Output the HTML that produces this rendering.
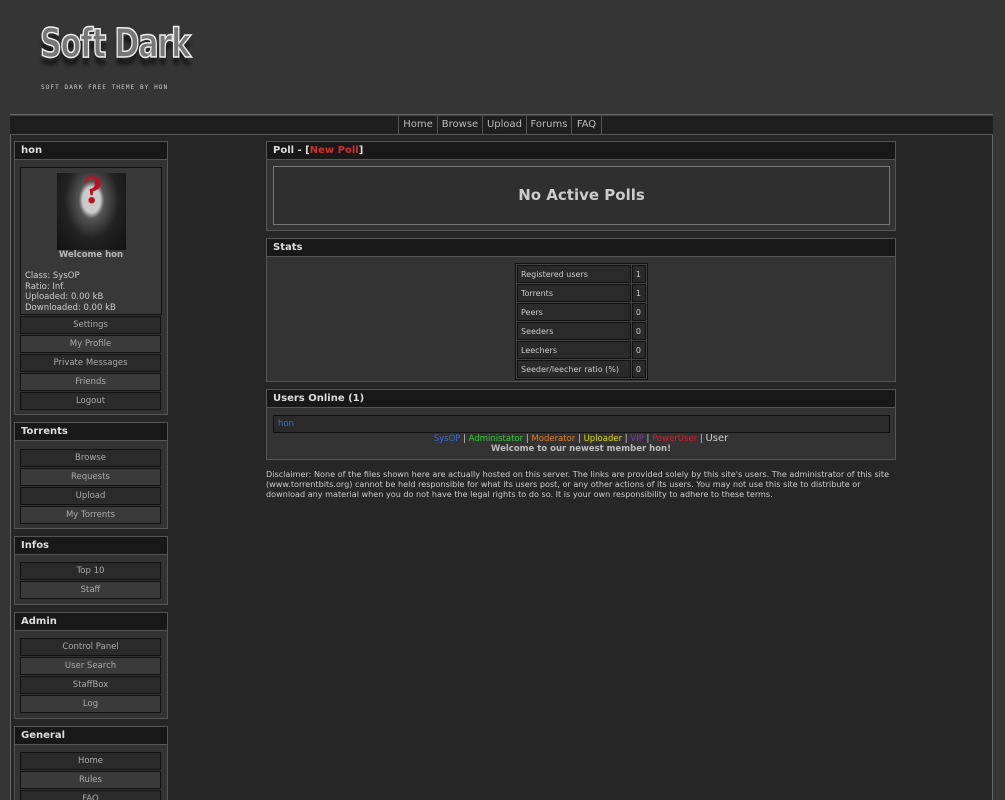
<!DOCTYPE html>
<html><head><meta charset="utf-8"><style>
*{box-sizing:border-box;margin:0;padding:0}
html,body{width:1005px;height:800px;overflow:hidden}
body{background:#353535;font-family:"DejaVu Sans",sans-serif;font-size:9px;color:#ccc;position:relative}
.a{position:absolute}
#wrap{left:10px;top:114px;width:983px;height:700px;border:1px solid #666;background:#262626}
#nav{left:10px;top:115px;width:983px;height:20px;background:#1e1e1e;border-bottom:1px solid #555;border-top:1px solid #444}
#nav .it{position:absolute;top:0;height:18px;border-left:1px solid #555;line-height:18px;font-size:10px;color:#bbb;text-align:center}
.box{position:absolute;background:#333;border:1px solid #555}
.hd{height:18px;background:#181818;border-bottom:1px solid #555;color:#ddd;font-weight:bold;font-size:10px;line-height:18px;padding-left:6px}
.btn{position:absolute;left:5px;width:141px;height:18px;border:1px solid #111;text-align:center;line-height:17px;color:#aaa;font-size:8.5px}
.d{background:#2a2a2a}.l{background:#3a3a3a}
.st td{border:1px solid #111;background:#2a2a2a;height:18px;padding:0 3px;font-size:8px;color:#ccc;white-space:nowrap}
.st{border:1px solid #111;border-collapse:separate;border-spacing:1px;background:#444}
</style></head><body>
<div class="a" style="left:40px;top:24px;font:bold 40px/1 'DejaVu Sans Condensed','Liberation Sans Narrow',sans-serif;color:#777;-webkit-text-stroke:1.5px #eee;letter-spacing:-1.5px;transform:scaleX(0.84);transform-origin:left;text-shadow:0 8px 4px rgba(0,0,0,.5)">Soft Dark</div>
<div class="a" style="left:41px;top:84px;font:6px 'DejaVu Sans Mono',monospace;color:#ccc;letter-spacing:1.1px">SOFT DARK FREE THEME BY HON</div>
<div class="a" id="wrap"></div>
<div class="a" id="nav">
<div class="it" style="left:388px;width:39px">Home</div>
<div class="it" style="left:427px;width:45px">Browse</div>
<div class="it" style="left:472px;width:44px">Upload</div>
<div class="it" style="left:516px;width:45px">Forums</div>
<div class="it" style="left:561px;width:30px">FAQ</div>
<div class="it" style="left:591px;width:1px"></div>
</div>

<div class="box" style="left:14px;top:141px;width:154px;height:274px">
<div class="hd">hon</div>
<div class="a" style="left:5px;top:25px;width:142px;height:148px;border:1px solid #111;background:#383838"></div>
<div class="a" style="left:42px;top:31px;width:69px;height:77px;background:radial-gradient(ellipse at 50% 35%,#ccc 0 18%,#555 26%,#222 55%,#111)"></div>
<div class="a" style="left:0;top:108px;width:152px;text-align:center;font-weight:bold;color:#bbb;font-size:8.5px">Welcome hon</div>
<div class="a" style="left:10px;top:129px;line-height:10.5px;color:#ccc;font-size:8.5px">Class: SysOP<br>Ratio: Inf.<br>Uploaded: 0.00 kB<br>Downloaded: 0.00 kB</div>
<div class="btn d" style="top:174px">Settings</div>
<div class="btn l" style="top:193px">My Profile</div>
<div class="btn d" style="top:212px">Private Messages</div>
<div class="btn l" style="top:231px">Friends</div>
<div class="btn d" style="top:250px">Logout</div>
</div>
<div class="a" style="left:83px;top:170px;font:bold 40px/1 'Liberation Serif',serif;color:#c01020">?</div>

<div class="box" style="left:14px;top:422px;width:154px;height:107px">
<div class="hd">Torrents</div>
<div class="btn d" style="top:26px">Browse</div>
<div class="btn l" style="top:45px">Requests</div>
<div class="btn d" style="top:64px">Upload</div>
<div class="btn l" style="top:83px">My Torrents</div>
</div>

<div class="box" style="left:14px;top:536px;width:154px;height:69px">
<div class="hd">Infos</div>
<div class="btn d" style="top:25px">Top 10</div>
<div class="btn l" style="top:44px">Staff</div>
</div>

<div class="box" style="left:14px;top:612px;width:154px;height:107px">
<div class="hd">Admin</div>
<div class="btn d" style="top:25px">Control Panel</div>
<div class="btn l" style="top:44px">User Search</div>
<div class="btn d" style="top:63px">StaffBox</div>
<div class="btn l" style="top:82px">Log</div>
</div>

<div class="box" style="left:14px;top:726px;width:154px;height:90px">
<div class="hd">General</div>
<div class="btn d" style="top:25px">Home</div>
<div class="btn l" style="top:44px">Rules</div>
<div class="btn d" style="top:63px">FAQ</div>
</div>

<div class="box" style="left:266px;top:141px;width:630px;height:90px">
<div class="hd">Poll - [<span style="color:#d03030">New Poll</span>]</div>
<div class="a" style="left:6px;top:24px;width:617px;height:59px;border:1px solid #777;background:#2f2f2f;text-align:center;line-height:57px;font-weight:bold;font-size:15px;color:#ccc">No Active Polls</div>
</div>

<div class="box" style="left:266px;top:238px;width:630px;height:144px">
<div class="hd">Stats</div>
<table class="st a" style="left:248px;top:24px;width:133px">
<tr><td>Registered users</td><td>1</td></tr>
<tr><td>Torrents</td><td>1</td></tr>
<tr><td>Peers</td><td>0</td></tr>
<tr><td>Seeders</td><td>0</td></tr>
<tr><td>Leechers</td><td>0</td></tr>
<tr><td>Seeder/leecher ratio (%)</td><td>0</td></tr>
</table>
</div>

<div class="box" style="left:266px;top:389px;width:630px;height:71px">
<div class="hd">Users Online (1)</div>
<div class="a" style="left:6px;top:25px;width:617px;height:18px;border:1px solid #111;background:#2a2a2a;padding-left:4px;line-height:16px;color:#3a6ad8;font-size:8.5px">hon</div>
<div class="a" style="left:0;top:44px;width:628px;text-align:center;font-size:8.5px;line-height:10px"><span style="color:#3a6ad8">SysOP</span> | <span style="color:#3c3">Administator</span> | <span style="color:#e08020">Moderator</span> | <span style="color:#dd0">Uploader</span> | <span style="color:#83c">VIP</span> | <span style="color:#c23">PowerUser</span> | <span style="font-size:10px">User</span><br><b style="color:#bbb">Welcome to our newest member hon!</b></div>
</div>

<div class="a" style="left:266px;top:469px;width:630px;font-size:8.1px;line-height:10px;color:#ccc">Disclaimer: None of the files shown here are actually hosted on this server. The links are provided solely by this site's users. The administrator of this site (www.torrentbits.org) cannot be held responsible for what its users post, or any other actions of its users. You may not use this site to distribute or download any material when you do not have the legal rights to do so. It is your own responsibility to adhere to these terms.</div>
</body></html>
